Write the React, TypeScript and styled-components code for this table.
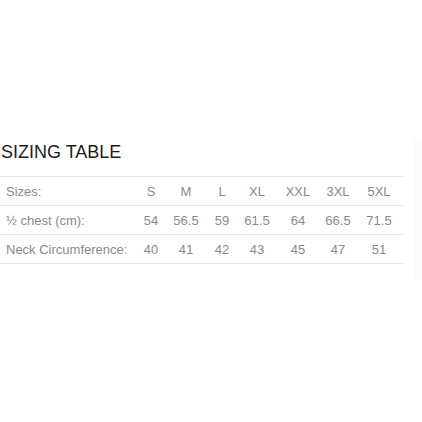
import React from "react";
import styled, { createGlobalStyle } from "styled-components";

const Global = createGlobalStyle`
  html, body { margin: 0; padding: 0; background: #fff; }
  body { font-family: "Liberation Sans", Arial, sans-serif; }
`;

const Page = styled.div`
  display: flex;
  align-items: flex-start;
  padding-top: 142px;
  width: 422px;
  box-sizing: border-box;
`;

const Section = styled.section`
  width: 403px;
`;

const Side = styled.div`
  margin-left: 10px;
  width: 9px;
  height: 140px;
  margin-top: -2px;
  background: #fbfbfb;
`;

const Heading = styled.h2`
  margin: 0 0 14px 1px;
  font-size: 18px;
  line-height: 20px;
  font-weight: 400;
  color: #1e1e1e;
`;

const Table = styled.div`
  display: grid;
  grid-template-columns: 135px 32px 38px 34px 36px 46px 34px 48px;
  border-top: 1px solid #e6e6e6;
`;

const Cell = styled.div<{ $label?: boolean }>`
  height: 28px;
  border-bottom: 1px solid #e6e6e6;
  display: flex;
  align-items: center;
  justify-content: ${(p) => (p.$label ? "flex-start" : "center")};
  padding-left: ${(p) => (p.$label ? "6px" : "0")};
  font-size: 13px;
  color: #8a8a8a;
  white-space: nowrap;
`;

const rows: string[][] = [
  ["Sizes:", "S", "M", "L", "XL", "XXL", "3XL", "5XL"],
  ["½ chest (cm):", "54", "56.5", "59", "61.5", "64", "66.5", "71.5"],
  ["Neck Circumference:", "40", "41", "42", "43", "45", "47", "51"],
];

export default function App() {
  return (
    <>
      <Global />
      <Page>
        <Section>
          <Heading>SIZING TABLE</Heading>
          <Table>
            {rows.map((r, i) =>
              r.map((c, j) => (
                <Cell key={`${i}-${j}`} $label={j === 0}>
                  {c}
                </Cell>
              ))
            )}
          </Table>
        </Section>
        <Side />
      </Page>
    </>
  );
}
